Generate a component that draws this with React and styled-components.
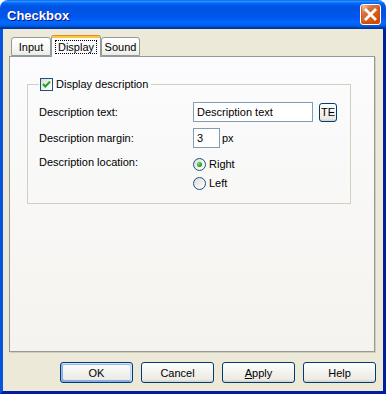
import React from 'react';
import styled, { createGlobalStyle } from 'styled-components';

const Global = createGlobalStyle`
  html, body { margin: 0; padding: 0; background: #ffffff; }
  body { font-family: "Liberation Sans", Arial, sans-serif; font-size: 11px; color: #000; }
  * { box-sizing: border-box; }
`;

const Window = styled.div`
  width: 386px;
  height: 394px;
  display: flex;
  flex-direction: column;
  overflow: hidden;
  border-radius: 8px 8px 0 0;
`;

const TitleBar = styled.div`
  flex: 0 0 29px;
  display: flex;
  align-items: center;
  justify-content: space-between;
  padding: 0 5px 0 7px;
  background: linear-gradient(
    to bottom,
    #0058ee 0%, #3593ff 4%, #288eff 6%, #127dff 8%, #036ffc 10%,
    #0262ee 14%, #0057e5 20%, #0054e3 24%, #0055eb 56%, #005bf5 66%,
    #026afe 76%, #0062ef 86%, #0052d6 92%, #0040ab 94%, #003092 100%
  );
`;

const Title = styled.span`
  color: #ffffff;
  font: bold 13px "Liberation Sans", Arial, sans-serif;
  text-shadow: 1px 1px #0f1089;
  padding-top: 1px;
`;

const CloseButton = styled.button`
  width: 21px;
  height: 21px;
  padding: 0;
  border: 1px solid #ffffff;
  border-radius: 3px;
  display: flex;
  align-items: center;
  justify-content: center;
  background: radial-gradient(circle at 90% 90%, #cc4600 0%, #dc6527 55%, #cd7546 68%, #ffccb2 90%, #ffffff 100%);
  box-shadow: inset 0 -1px 2px 1px #da4600;
`;

const Frame = styled.div`
  flex: 1;
  display: flex;
  flex-direction: column;
  background: #ece9d8;
  border-left: 3px solid #0855dd;
  border-right: 3px solid #001ea0;
  border-bottom: 3px solid #001ea0;
  padding: 6px 8px 0 6px;
`;

const TabStrip = styled.div`
  height: 21px;
  display: flex;
  align-items: flex-end;
  padding-left: 2px;
`;

const Tab = styled.div`
  position: relative;
  width: ${(p) => p.$w}px;
  height: ${(p) => (p.$active ? 22 : 19)}px;
  margin-bottom: ${(p) => (p.$active ? -1 : 0)}px;
  z-index: ${(p) => (p.$active ? 2 : 1)};
  border: 1px solid #919b9c;
  border-top: ${(p) => (p.$active ? 'none' : '1px solid #919b9c')};
  border-bottom: ${(p) => (p.$active ? 'none' : '1px solid #919b9c')};
  border-radius: 3px 3px 0 0;
  background: ${(p) =>
    p.$active
      ? 'linear-gradient(to bottom, #e68b2c 0, #e68b2c 1px, #ffc73c 1px, #ffc73c 3px, #fcfcfe 3px, #fcfcfe 100%)'
      : 'linear-gradient(to bottom, #ffffff 0%, #f7f7f4 60%, #ecebe6 100%)'};
  display: flex;
  align-items: ${(p) => (p.$active ? 'flex-start' : 'center')};
  justify-content: center;
  padding-top: ${(p) => (p.$active ? 6 : 1)}px;
  font-size: 11px;
  line-height: 13px;
  cursor: default;
`;

const FocusLabel = styled.span`
  outline: 1px dotted #000;
  padding: 0 2px;
  line-height: 12px;
`;

const Panel = styled.div`
  flex: 1;
  border: 1px solid #919b9c;
  background: linear-gradient(to bottom, #fcfcfe 0%, #f4f3ee 100%);
  box-shadow: 1px 1px 0 #d0cebf;
  padding: 21px 23px 0 17px;
`;

const Group = styled.fieldset`
  margin: 0;
  width: 324px;
  border: 1px solid #d0d0bf;
  padding: 11px 12px 13px 11px;
`;

const Legend = styled.legend`
  padding: 0 3px 0 1px;
  margin: 0;
  height: 13px;
  display: flex;
  align-items: center;
  gap: 3px;
  line-height: 13px;
`;

const CheckBox = styled.span`
  width: 13px;
  height: 13px;
  border: 1px solid #1c5180;
  background: linear-gradient(135deg, #dcdcd7 0%, #ffffff 100%);
  display: inline-flex;
  align-items: center;
  justify-content: center;
`;

const FormGrid = styled.div`
  display: grid;
  grid-template-columns: 154px 1fr;
  column-gap: 0;
  row-gap: 6px;
  align-items: center;
`;

const Label = styled.span`
  line-height: 13px;
  align-self: ${(p) => (p.$top ? 'start' : 'center')};
  margin-top: ${(p) => (p.$top ? 2 : 0)}px;
`;

const Controls = styled.div`
  display: flex;
  align-items: center;
  gap: ${(p) => p.$gap || 0}px;
`;

const TextInput = styled.div`
  width: ${(p) => p.$w}px;
  height: 20px;
  border: 1px solid #7f9db9;
  background: #ffffff;
  padding: 0 3px;
  display: flex;
  align-items: center;
  line-height: 13px;
`;

const Unit = styled.span`
  line-height: 13px;
  margin-left: -4px;
`;

const RadioGroup = styled.div`
  display: flex;
  flex-direction: column;
  gap: 6px;
  margin-top: 4px;
`;

const RadioRow = styled.label`
  display: flex;
  align-items: center;
  gap: 3px;
  height: 13px;
  line-height: 13px;
`;

const RadioCircle = styled.span`
  width: 13px;
  height: 13px;
  border-radius: 50%;
  border: 1px solid #1c5180;
  background: linear-gradient(135deg, #dcdcd7 0%, #ffffff 100%);
  display: inline-flex;
  align-items: center;
  justify-content: center;
  &::after {
    content: '';
    display: ${(p) => (p.$checked ? 'block' : 'none')};
    width: 5px;
    height: 5px;
    border-radius: 50%;
    background: radial-gradient(circle at 35% 35%, #6fe06a 0%, #21a121 60%, #0f8a0f 100%);
  }
`;

const ButtonRow = styled.div`
  display: flex;
  justify-content: flex-end;
  gap: 8px;
  margin: 10px -1px 8px 0;
`;

const Button = styled.button`
  width: ${(p) => p.$w || 73}px;
  height: ${(p) => p.$h || 21}px;
  padding: 0;
  border: 1px solid #003c74;
  border-radius: 3px;
  background: linear-gradient(to bottom, #ffffff 0%, #f4f4f0 40%, #ecebe6 86%, #d6d0c5 100%);
  font: 11px "Liberation Sans", Arial, sans-serif;
  color: #000;
  box-shadow: ${(p) =>
    p.$default
      ? 'inset -1px 1px #cee7ff, inset 1px 2px #98b8ea, inset -2px 2px #bcd4f6, inset 1px -1px #89ade4, inset 2px -2px #89ade4'
      : 'none'};
  cursor: default;
`;

const Accel = styled.span`
  text-decoration: underline;
`;

export default function App() {
  return (
    <>
      <Global />
      <Window>
        <TitleBar>
          <Title>Checkbox</Title>
          <CloseButton aria-label="Close">
            <svg width="15" height="15" viewBox="0 0 15 15">
              <path d="M3 3 L12 12 M12 3 L3 12" stroke="#ffffff" strokeWidth="2.8" strokeLinecap="square" />
            </svg>
          </CloseButton>
        </TitleBar>
        <Frame>
          <TabStrip>
            <Tab $w={40}>Input</Tab>
            <Tab $w={50} $active>
              <FocusLabel>Display</FocusLabel>
            </Tab>
            <Tab $w={39}>Sound</Tab>
          </TabStrip>
          <Panel>
            <Group>
              <Legend>
                <CheckBox>
                  <svg width="11" height="11" viewBox="0 0 11 11">
                    <path d="M2 5 L4.3 7.5 L9 2.6" stroke="#21a121" strokeWidth="2" fill="none" />
                  </svg>
                </CheckBox>
                <span>Display description</span>
              </Legend>
              <FormGrid>
                <Label>Description text:</Label>
                <Controls $gap={6}>
                  <TextInput $w={120}>Description text</TextInput>
                  <Button $w={18} $h={19}>TE</Button>
                </Controls>
                <Label>Description margin:</Label>
                <Controls $gap={6}>
                  <TextInput $w={27}>3</TextInput>
                  <Unit>px</Unit>
                </Controls>
                <Label $top>Description location:</Label>
                <RadioGroup>
                  <RadioRow>
                    <RadioCircle $checked />
                    <span>Right</span>
                  </RadioRow>
                  <RadioRow>
                    <RadioCircle />
                    <span>Left</span>
                  </RadioRow>
                </RadioGroup>
              </FormGrid>
            </Group>
          </Panel>
          <ButtonRow>
            <Button $default>OK</Button>
            <Button>Cancel</Button>
            <Button>
              <Accel>A</Accel>pply
            </Button>
            <Button>Help</Button>
          </ButtonRow>
        </Frame>
      </Window>
    </>
  );
}
